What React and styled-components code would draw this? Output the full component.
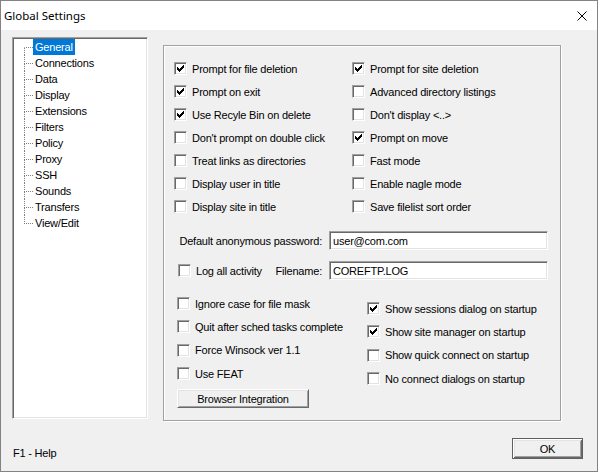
import React from "react";
import styled, { createGlobalStyle, css } from "styled-components";

const Global = createGlobalStyle`
  html, body { margin: 0; padding: 0; background: #f0f0f0; }
  body { width: 598px; height: 472px; overflow: hidden; font-family: "Liberation Sans", Arial, sans-serif; font-size: 11px; letter-spacing: -0.2px; color: #000; }
  * { box-sizing: border-box; }
`;

const sunken = css`
  border: 1px solid;
  border-color: #a0a0a0 #ffffff #ffffff #a0a0a0;
  box-shadow: inset 1px 1px 0 #696969, inset -1px -1px 0 #e3e3e3;
  background: #fff;
`;

const raised = css`
  border: 1px solid;
  border-color: #ffffff #696969 #696969 #ffffff;
  box-shadow: inset 1px 1px 0 #e3e3e3, inset -1px -1px 0 #a0a0a0;
  background: #f0f0f0;
`;

const Window = styled.div`
  width: 598px;
  height: 472px;
  border: 1px solid #838383;
  background: #f0f0f0;
  display: flex;
  flex-direction: column;
`;

const TitleBar = styled.div`
  height: 29px;
  flex: none;
  background: #fff;
  display: flex;
  align-items: center;
  justify-content: space-between;
  padding: 0 10px 0 3px;
`;

const Title = styled.span`
  font-family: "Noto Sans", "Open Sans", sans-serif;
  font-size: 11.5px;
  letter-spacing: 0;
  color: #000;
`;

const CloseIcon = styled.svg`
  width: 10px;
  height: 10px;
  display: block;
`;

const Body = styled.div`
  flex: 1;
  display: flex;
  flex-direction: column;
  padding: 7px 14px 0 11px;
`;

const Main = styled.div`
  display: flex;
  align-items: flex-start;
  gap: 15px;
`;

const Tree = styled.div`
  ${sunken};
  width: 136px;
  height: 382px;
  padding: 1px 0 0 11px;
  display: flex;
  flex-direction: column;
`;

const TreeRow = styled.div`
  display: flex;
  height: 16px;
`;

const Connector = styled.div`
  width: 9px;
  display: flex;
  flex-direction: column;
  flex: none;
`;

const ConnTop = styled.span`
  height: 9px;
  border-bottom: 1px dotted #7f7f7f;
  border-left: 1px dotted ${(p) => (p.$first ? "transparent" : "#7f7f7f")};
`;

const ConnBottom = styled.span`
  height: 7px;
  border-left: 1px dotted ${(p) => (p.$last ? "transparent" : "#7f7f7f")};
`;

const TreeLabel = styled.span`
  height: 16px;
  line-height: 16px;
  padding: 0 2px;
  white-space: nowrap;
  background: ${(p) => (p.$selected ? "#0078d7" : "transparent")};
  color: ${(p) => (p.$selected ? "#fff" : "#000")};
`;

const GroupBox = styled.div`
  margin-top: 8px;
  width: 398px;
  height: 376px;
  border: 1px solid #a0a0a0;
  box-shadow: inset 1px 1px 0 #fff, 1px 1px 0 #fff;
  padding: 11px 0 0 10px;
  display: flex;
  flex-direction: column;
`;

const CheckGrid = styled.div`
  display: grid;
  grid-template-columns: 178px auto;
  grid-auto-rows: 23px;
`;

const CheckItem = styled.label`
  display: flex;
  align-items: center;
  gap: 5px;
  white-space: nowrap;
`;

const Box = styled.span`
  ${sunken};
  width: 13px;
  height: 13px;
  flex: none;
  display: flex;
  align-items: center;
  justify-content: center;
`;

const CheckSvg = styled.svg`
  width: 7px;
  height: 7px;
  display: block;
`;

const FieldGrid = styled.div`
  margin-top: 13px;
  display: grid;
  grid-template-columns: 148px 219px;
  grid-auto-rows: 19px;
  column-gap: 7px;
  row-gap: 11px;
`;

const FieldLabel = styled.span`
  align-self: center;
  text-align: right;
  white-space: nowrap;
`;

const LogCell = styled.div`
  display: flex;
  align-items: center;
  justify-content: space-between;
  padding-left: 4px;
`;

const TextInput = styled.div`
  ${sunken};
  height: 19px;
  padding: 0 3px;
  display: flex;
  align-items: center;
  white-space: nowrap;
`;

const Lower = styled.div`
  margin-top: 12px;
  display: flex;
`;

const LowerCol = styled.div`
  display: flex;
  flex-direction: column;
  width: ${(p) => p.$width || "auto"};
  padding-left: ${(p) => p.$left || 0}px;
  padding-top: ${(p) => p.$top || 0}px;
`;

const LowerRows = styled.div`
  display: grid;
  grid-auto-rows: 23.3px;
`;

const Button = styled.button`
  ${raised};
  font: inherit;
  letter-spacing: inherit;
  color: #000;
  padding: 0;
  display: flex;
  align-items: center;
  justify-content: center;
  width: ${(p) => p.$w}px;
  height: ${(p) => p.$h}px;
  margin-top: ${(p) => p.$mt || 0}px;
  ${(p) =>
    p.$default &&
    css`
      border: 1px solid #5f5f5f;
      box-shadow: inset 1px 1px 0 #fff, inset -1px -1px 0 #696969, inset 2px 2px 0 #e3e3e3, inset -2px -2px 0 #a0a0a0;
    `}
`;

const Footer = styled.div`
  margin-top: 17px;
  display: flex;
  justify-content: space-between;
  align-items: flex-start;
`;

const HelpText = styled.span`
  margin-top: 9px;
  padding-left: 1px;
  line-height: 13px;
`;

const Check = ({ checked }) => (
  <Box>
    {checked && (
      <CheckSvg viewBox="0 0 7 7" shapeRendering="crispEdges">
        <path
          fill="#000"
          d="M6 0h1v1H6z M5 1h2v1H5z M0 2h1v1H0z M4 2h3v1H4z M0 3h2v1H0z M3 3h3v1H3z M0 4h5v1H0z M1 5h3v1H1z M2 6h1v1H2z"
        />
      </CheckSvg>
    )}
  </Box>
);

const treeItems = [
  "General", "Connections", "Data", "Display", "Extensions", "Filters",
  "Policy", "Proxy", "SSH", "Sounds", "Transfers", "View/Edit",
];

const gridItems = [
  ["Prompt for file deletion", true], ["Prompt for site deletion", true],
  ["Prompt on exit", true], ["Advanced directory listings", false],
  ["Use Recyle Bin on delete", true], ["Don't display <..>", false],
  ["Don't prompt on double click", false], ["Prompt on move", true],
  ["Treat links as directories", false], ["Fast mode", false],
  ["Display user in title", false], ["Enable nagle mode", false],
  ["Display site in title", false], ["Save filelist sort order", false],
];

const lowerA = [
  ["Ignore case for file mask", false],
  ["Quit after sched tasks complete", false],
  ["Force Winsock ver 1.1", false],
  ["Use FEAT", false],
];

const lowerB = [
  ["Show sessions dialog on startup", true],
  ["Show site manager on startup", true],
  ["Show quick connect on startup", false],
  ["No connect dialogs on startup", false],
];

export default function App() {
  return (
    <>
      <Global />
      <Window>
        <TitleBar>
          <Title>Global Settings</Title>
          <CloseIcon viewBox="0 0 10 10">
            <path d="M0.5 0.5L9.5 9.5M9.5 0.5L0.5 9.5" stroke="#000" strokeWidth="1" fill="none" />
          </CloseIcon>
        </TitleBar>
        <Body>
          <Main>
            <Tree>
              {treeItems.map((t, i) => (
                <TreeRow key={t}>
                  <Connector>
                    <ConnTop $first={i === 0} />
                    <ConnBottom $last={i === treeItems.length - 1} />
                  </Connector>
                  <TreeLabel $selected={i === 0}>{t}</TreeLabel>
                </TreeRow>
              ))}
            </Tree>
            <GroupBox>
              <CheckGrid>
                {gridItems.map(([t, c]) => (
                  <CheckItem key={t}>
                    <Check checked={c} />
                    <span>{t}</span>
                  </CheckItem>
                ))}
              </CheckGrid>
              <FieldGrid>
                <FieldLabel>Default anonymous password:</FieldLabel>
                <TextInput>user@com.com</TextInput>
                <LogCell>
                  <CheckItem>
                    <Check checked={false} />
                    <span>Log all activity</span>
                  </CheckItem>
                  <span>Filename:</span>
                </LogCell>
                <TextInput>COREFTP.LOG</TextInput>
              </FieldGrid>
              <Lower>
                <LowerCol $width="193px" $left={3}>
                  <LowerRows>
                    {lowerA.map(([t, c]) => (
                      <CheckItem key={t}>
                        <Check checked={c} />
                        <span>{t}</span>
                      </CheckItem>
                    ))}
                  </LowerRows>
                  <Button $w={132} $h={19} $mt={4}>Browser Integration</Button>
                </LowerCol>
                <LowerCol $top={5}>
                  <LowerRows>
                    {lowerB.map(([t, c]) => (
                      <CheckItem key={t}>
                        <Check checked={c} />
                        <span>{t}</span>
                      </CheckItem>
                    ))}
                  </LowerRows>
                </LowerCol>
              </Lower>
            </GroupBox>
          </Main>
          <Footer>
            <HelpText>F1 - Help</HelpText>
            <Button $w={71} $h={21} $default>OK</Button>
          </Footer>
        </Body>
      </Window>
    </>
  );
}
